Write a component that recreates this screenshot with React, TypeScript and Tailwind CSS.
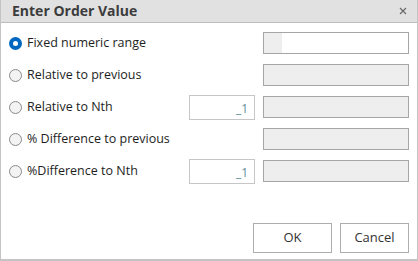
const rows = [
  { label: "Fixed numeric range", checked: true, nth: false },
  { label: "Relative to previous", checked: false, nth: false },
  { label: "Relative to Nth", checked: false, nth: true },
  { label: "% Difference to previous", checked: false, nth: false },
  { label: "%Difference to Nth", checked: false, nth: true },
];

const Radio = ({ checked }: { checked: boolean }) =>
  checked ? (
    <span className="w-[13px] h-[13px] rounded-full bg-[#0067c0] flex items-center justify-center shrink-0">
      <span className="w-[5px] h-[5px] rounded-full bg-white" />
    </span>
  ) : (
    <span className="w-[13px] h-[13px] rounded-full border border-[#8a8a8a] bg-[#f3f3f3] shrink-0" />
  );

const App = () => {
  return (
    <div
      className="w-[418px] h-[261px] bg-white flex flex-col border-x border-b-2 border-[#c4c4c4] text-[#1e1e1e]"
      style={{ fontFamily: '"Open Sans", "Noto Sans", sans-serif' }}
    >
      <div className="h-[23px] shrink-0 bg-[#e1e1e1] border-b border-[#bdbdbd] flex items-center justify-between pl-[11px] pr-[10px]">
        <span className="text-[14px] font-bold text-[#3c3c3c] leading-none">Enter Order Value</span>
        <svg width="8" height="8" viewBox="0 0 8 8">
          <path d="M1 1 L7 7 M7 1 L1 7" stroke="#666" strokeWidth="1.1" />
        </svg>
      </div>
      <div className="flex-1 flex flex-col pt-[4px]">
        {rows.map((r) => (
          <div key={r.label} className="h-[32px] flex items-center pl-[8px] pr-[8px]">
            <Radio checked={r.checked} />
            <span className="ml-[5px] text-[12.5px] flex-1">{r.label}</span>
            {r.nth && (
              <div className="w-[66px] h-[25px] border border-[#c6c6c6] bg-white mr-[8px] flex items-end justify-end pr-[6px] pb-[4px] text-[12px] leading-none text-[#5e8d96] self-start mt-[4px]">
                _1
              </div>
            )}
            <div
              className={
                r.checked
                  ? "w-[146px] h-[22px] border border-[#a5a5a5] bg-white flex"
                  : "w-[146px] h-[22px] border border-[#a5a5a5] bg-[#eeeeee]"
              }
            >
              {r.checked && <span className="w-[18px] h-full bg-[#eeeeee]" />}
            </div>
          </div>
        ))}
        <div className="flex-1 flex items-end justify-end gap-[8px] pr-[8px] pb-[6px]">
          <button className="w-[79px] h-[30px] border border-[#adadad] bg-white text-[13px] text-[#333]">
            OK
          </button>
          <button className="w-[69px] h-[30px] border border-[#adadad] bg-white text-[13px] text-[#333]">
            Cancel
          </button>
        </div>
      </div>
    </div>
  );
};

export default App;
